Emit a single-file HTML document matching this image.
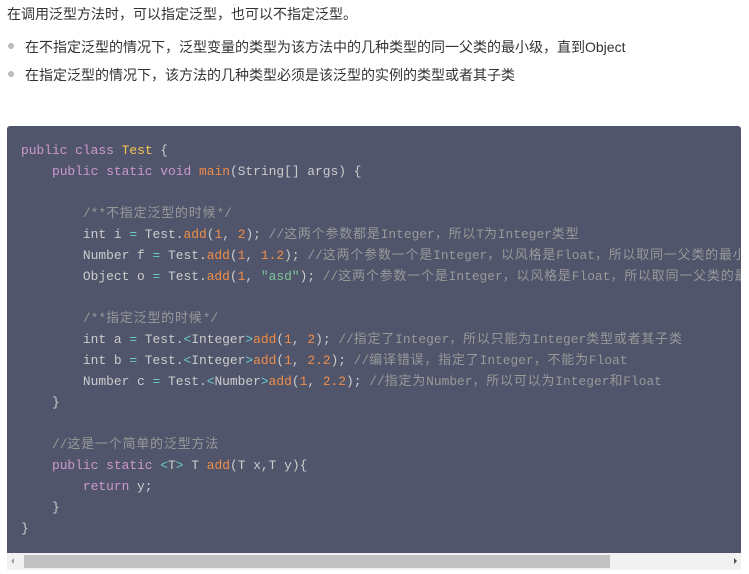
<!DOCTYPE html>
<html><head><meta charset="utf-8"><style>
body{margin:0;background:#fff;width:749px;height:574px;overflow:hidden;font-family:"Liberation Sans","Noto Sans CJK SC",sans-serif;color:#333;font-size:14px}
.p{position:absolute;left:7px;top:5px;line-height:18px}
.li{position:absolute;left:25px;line-height:18px}
.dot{position:absolute;left:8px;width:6px;height:6px;border-radius:50%;background:#bbb}
.code{position:absolute;left:7px;top:126px;width:734px;height:427px;background:#50556b;border-radius:3px 3px 0 0;overflow:hidden}
pre{margin:0;padding:14px 0 0 14px;font-family:"Liberation Mono","Noto Sans CJK SC",monospace;font-size:12.9px;line-height:21px;color:#ccc;white-space:pre}
.k{color:#cc99cd}.c{color:#999}.y{color:#f8c555}.f{color:#f08d49}.n{color:#f08d49}.s{color:#7ec699}.o{color:#67cdcc}
i{font-style:normal;letter-spacing:0.9px}
.sb{position:absolute;left:7px;top:553px;width:734px;height:17px;background:#f1f1f1}
.th{position:absolute;left:17px;top:2px;width:586px;height:13px;background:#c1c1c1}
</style></head><body>
<div class="p">在调用泛型方法时，可以指定泛型，也可以不指定泛型。</div>
<div class="dot" style="top:43px"></div><div class="li" style="top:38px">在不指定泛型的情况下，泛型变量的类型为该方法中的几种类型的同一父类的最小级，直到Object</div>
<div class="dot" style="top:71px"></div><div class="li" style="top:66px">在指定泛型的情况下，该方法的几种类型必须是该泛型的实例的类型或者其子类</div>
<div class="code"><pre><span class="k">public</span> <span class="k">class</span> <span class="y">Test</span> {
    <span class="k">public</span> <span class="k">static</span> <span class="k">void</span> <span class="f">main</span>(String[] args) {

        <span class="c">/**<i>不指定泛型的时候</i>*/</span>
        int i <span class="o">=</span> Test.<span class="f">add</span>(<span class="n">1</span>, <span class="n">2</span>); <span class="c">//<i>这两个参数都是</i>Integer<i>，所以</i>T<i>为</i>Integer<i>类型</i></span>
        Number f <span class="o">=</span> Test.<span class="f">add</span>(<span class="n">1</span>, <span class="n">1.2</span>); <span class="c">//<i>这两个参数一个是</i>Integer<i>，以风格是</i>Float<i>，所以取同一父类的最小级，为</i>Number</span>
        Object o <span class="o">=</span> Test.<span class="f">add</span>(<span class="n">1</span>, <span class="s">"asd"</span>); <span class="c">//<i>这两个参数一个是</i>Integer<i>，以风格是</i>Float<i>，所以取同一父类的最小级，为</i>Object</span>

        <span class="c">/**<i>指定泛型的时候</i>*/</span>
        int a <span class="o">=</span> Test.<span class="o">&lt;</span>Integer<span class="o">&gt;</span><span class="f">add</span>(<span class="n">1</span>, <span class="n">2</span>); <span class="c">//<i>指定了</i>Integer<i>，所以只能为</i>Integer<i>类型或者其子类</i></span>
        int b <span class="o">=</span> Test.<span class="o">&lt;</span>Integer<span class="o">&gt;</span><span class="f">add</span>(<span class="n">1</span>, <span class="n">2.2</span>); <span class="c">//<i>编译错误，指定了</i>Integer<i>，不能为</i>Float</span>
        Number c <span class="o">=</span> Test.<span class="o">&lt;</span>Number<span class="o">&gt;</span><span class="f">add</span>(<span class="n">1</span>, <span class="n">2.2</span>); <span class="c">//<i>指定为</i>Number<i>，所以可以为</i>Integer<i>和</i>Float</span>
    }

    <span class="c">//<i>这是一个简单的泛型方法</i></span>
    <span class="k">public</span> <span class="k">static</span> <span class="o">&lt;</span>T<span class="o">&gt;</span> T <span class="f">add</span>(T x,T y){
        <span class="k">return</span> y;
    }
}</pre></div>
<div class="sb"><div class="th"></div>
<div style="position:absolute;left:4px;top:5px;width:0;height:0;border-top:3px solid transparent;border-bottom:3px solid transparent;border-right:3px solid #a3a3a3"></div>
<div style="position:absolute;right:4px;top:5px;width:0;height:0;border-top:3px solid transparent;border-bottom:3px solid transparent;border-left:3px solid #505050"></div>
</div>
</body></html>
